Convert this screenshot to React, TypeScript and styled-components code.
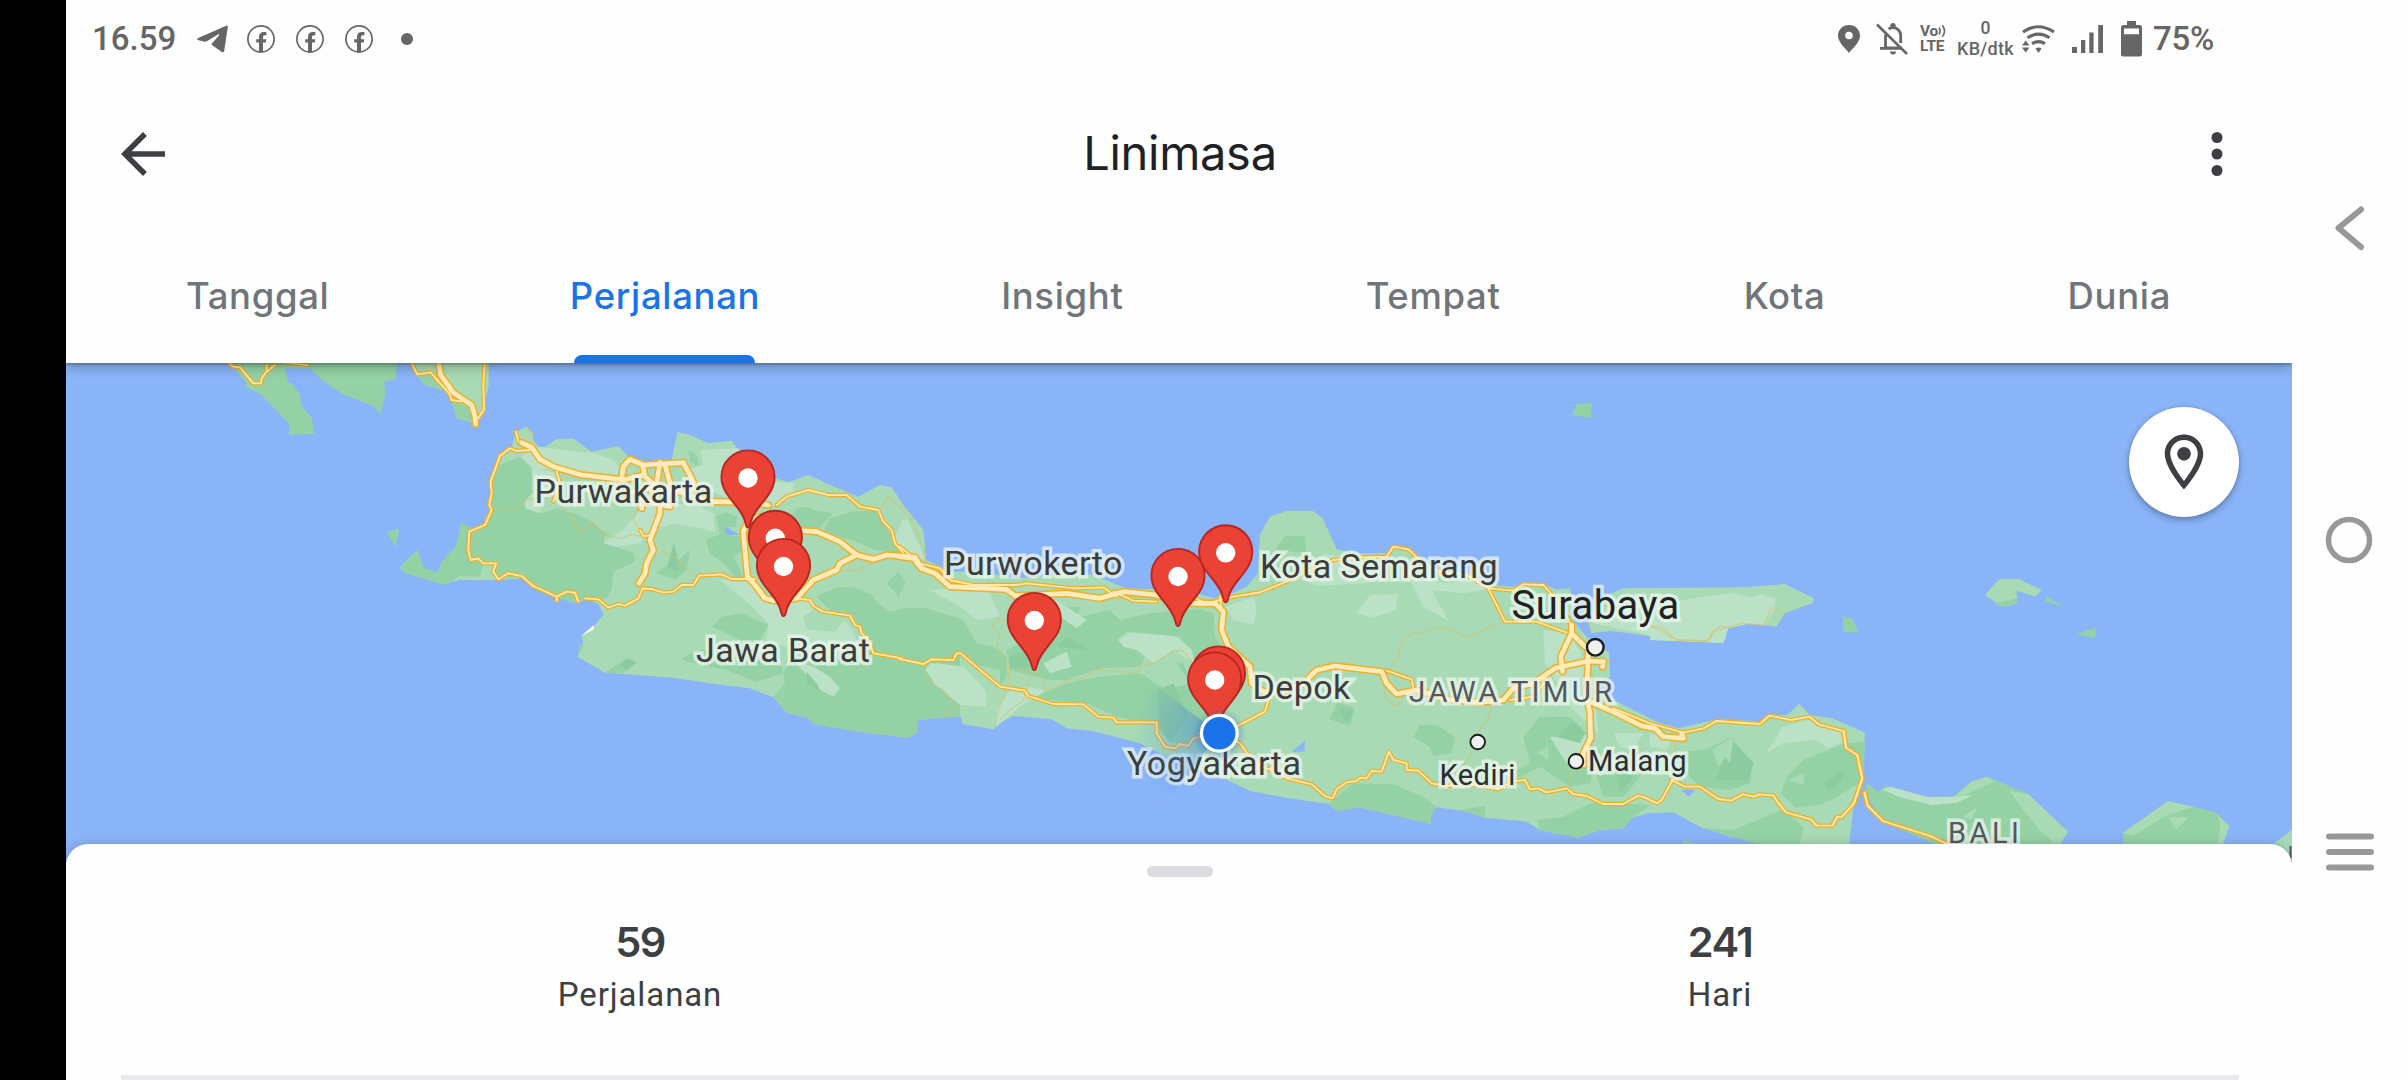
import React from "react";
import styled, { createGlobalStyle } from "styled-components";

const GlobalStyle = createGlobalStyle`
  *, *::before, *::after { box-sizing: border-box; }
  body { margin: 0; background: #fefefe; overflow: hidden; }
`;

const ui = `Roboto, "Liberation Sans", sans-serif`;
const display = `Inter, Roboto, "Liberation Sans", sans-serif`;

const Screen = styled.div`
  display: flex;
  width: 2408px;
  height: 1080px;
  overflow: hidden;
  background: #fefefe;
  font-family: ${ui};
`;

const Cutout = styled.div`
  flex: 0 0 66px;
  background: #000;
`;

const AppFrame = styled.main`
  flex: 0 0 2226px;
  display: flex;
  flex-direction: column;
  overflow: hidden;
`;

/* ---------- status bar ---------- */

const StatusBar = styled.div`
  flex: 0 0 77px;
  display: flex;
  justify-content: space-between;
  padding: 0 77px 0 26px;
  color: #666;
`;

const StatusGroup = styled.div`
  display: flex;
  align-items: center;
  height: 77px;
`;

const StatusText = styled.span<{ $width: number; $left?: number; $track?: number; $weight?: number }>`
  width: ${(p) => p.$width}px;
  margin-left: ${(p) => p.$left ?? 0}px;
  letter-spacing: ${(p) => p.$track ?? 0}px;
  font-size: 33px;
  font-weight: ${(p) => p.$weight ?? 400};
  line-height: 40px;
  white-space: nowrap;
  padding-top: 1px;
`;

const StatusIcon = styled.svg<{ $left: number }>`
  display: block;
  flex: none;
  margin-left: ${(p) => p.$left}px;
`;

const Stack = styled.div<{ $left: number; $width: number }>`
  display: flex;
  flex-direction: column;
  flex: none;
  width: ${(p) => p.$width}px;
  margin-left: ${(p) => p.$left}px;
  white-space: nowrap;
`;

const VoRow = styled.div`
  display: flex;
  align-items: center;
  height: 14px;
  font-size: 15.5px;
  font-weight: 700;
  letter-spacing: -0.4px;
  line-height: 14px;
`;

const LteRow = styled.div`
  height: 15px;
  font-size: 15.5px;
  font-weight: 700;
  letter-spacing: -0.2px;
  line-height: 17px;
`;

const SpeedValue = styled.div`
  height: 18px;
  font-size: 17.5px;
  font-weight: 500;
  line-height: 16px;
  text-align: center;
`;

const SpeedUnit = styled.div`
  height: 20px;
  font-size: 18px;
  font-weight: 500;
  line-height: 22px;
  letter-spacing: 0.3px;
  text-align: center;
`;

/* ---------- top bar and tabs ---------- */

const TopBar = styled.header`
  flex: 0 0 154px;
  display: grid;
  grid-template-columns: 66px 1fr 66px;
  align-items: center;
  padding: 0 42px 0 44px;
  color: #3c4043;
`;

const Title = styled.h1`
  margin: 0;
  padding-bottom: 3px;
  text-align: center;
  font: 400 47px/60px ${display};
  letter-spacing: -0.3px;
  color: #202124;
`;

const IconButton = styled.button`
  display: block;
  width: 66px;
  height: 66px;
  padding: 0;
  border: 0;
  background: none;
  color: #3c4043;
`;

const Tabs = styled.nav`
  position: relative;
  z-index: 2;
  flex: 0 0 132px;
  display: flex;
  justify-content: space-around;
  background: #fefefe;
  box-shadow: 0 3px 12px rgba(0, 0, 0, 0.32), 0 1px 3px rgba(0, 0, 0, 0.28);
  clip-path: inset(0 0 -24px 0);
`;

const Tab = styled.button<{ $active?: boolean; $width: number }>`
  display: flex;
  flex-direction: column;
  align-items: center;
  justify-content: space-between;
  width: ${(p) => p.$width}px;
  padding: 41px 0 0;
  border: 0;
  background: none;
  font: 500 36.5px/48px ${display};
  letter-spacing: 0.65px;
  white-space: nowrap;
  color: ${(p) => (p.$active ? "#1a73e8" : "#70757a")};
`;

const Underline = styled.span`
  width: 181px;
  height: 8px;
  border-radius: 8px 8px 0 0;
  background: #1a73e8;
`;

/* ---------- map ---------- */

const MapView = styled.section`
  position: relative;
  flex: 0 0 500px;
  overflow: hidden;
  background: #8ab4f8;
`;

const MapCanvas = styled.svg`
  display: block;
  width: 2226px;
  height: 500px;
`;

const MapOverlay = styled(MapCanvas)`
  position: absolute;
  inset: 0;
`;

const Place = styled.span<{ $x: number; $base: number; $size?: number; $track?: number; $color?: string }>`
  position: absolute;
  left: ${(p) => p.$x - 66}px;
  top: ${(p) => p.$base - 363 - 24.5 - 0.3415 * (p.$size ?? 34)}px;
  height: 48px;
  font-size: ${(p) => p.$size ?? 34}px;
  line-height: 48px;
  letter-spacing: ${(p) => p.$track ?? 0.45}px;
  color: ${(p) => p.$color ?? "#3c3c3c"};
  -webkit-text-stroke: 7px rgba(236, 246, 238, 0.75);
  paint-order: stroke fill;
  white-space: nowrap;
`;

const LayersButton = styled.button`
  position: absolute;
  top: 44px;
  right: 53px;
  width: 110px;
  height: 110px;
  padding: 22px;
  border: 0;
  border-radius: 50%;
  background: #fff;
  box-shadow: 0 3px 7px rgba(0, 0, 0, 0.3), 0 0 3px rgba(0, 0, 0, 0.12);
  color: #3c4043;
`;

/* ---------- bottom sheet ---------- */

const Sheet = styled.section`
  position: relative;
  z-index: 2;
  flex: 0 0 236px;
  display: flex;
  flex-direction: column;
  align-items: center;
  margin-top: -19px;
  padding: 22px 0 0 2px;
  border-radius: 22px 22px 0 0;
  background: #fefefe;
  box-shadow: 0 -1px 10px rgba(0, 0, 0, 0.16);
`;

const Handle = styled.div`
  width: 66px;
  height: 11px;
  border-radius: 5.5px;
  background: #dadce0;
`;

const Stats = styled.div`
  display: grid;
  grid-template-columns: 1080px 1080px;
  flex: 1;
  padding-top: 38px;
`;

const Stat = styled.div`
  display: flex;
  flex-direction: column;
  align-items: center;
  color: #3c4043;
`;

const StatValue = styled.div`
  font: 600 41.5px/54px ${display};
  letter-spacing: -1.5px;
`;

const StatLabel = styled.div`
  padding-top: 1px;
  font-size: 33px;
  line-height: 50px;
  letter-spacing: 0.9px;
`;

const Divider = styled.div`
  width: 2118px;
  height: 5px;
  background: #e8eaed;
`;

/* ---------- system navigation ---------- */

const SystemNav = styled.aside`
  flex: 1;
  display: flex;
  flex-direction: column;
  align-items: center;
  justify-content: space-between;
  padding: 198px 0;
`;

const NavIcon = styled.svg`
  display: block;
  width: 60px;
  height: 60px;
  stroke: #989898;
  stroke-width: 6;
  fill: none;
  stroke-linecap: round;
  stroke-linejoin: round;
`;

/* ---------- map data: each section has its own local grid ---------- */

type Section = {
  at: string;
  land?: string[];
  forest?: string[];
  plain?: string[];
  water?: string[];
  trail?: string[];
  road?: string[];
  highway?: string[];
};

const third = 1 / 3;

const sections: Section[] = [
  {
    at: `translate(60 350) scale(${third})`,
    land: [
      "1048,30 1070,75 1095,105 1165,125 1190,205 1230,215 1250,225 1272,180 1286,105 1286,30",
      "1172,697 1195,678 1260,680 1272,640 1300,615 1330,640 1375,655 1375,687 1205,689",
    ],
    forest: [
      "495,30 520,52 560,100 558,112 605,135 687,222 687,255 764,251 755,203 723,165 720,133 695,100 684,98 676,55 750,55 795,98 850,133 938,167 962,191 977,130 972,95 1008,86 1011,30",
      "1068,75 1112,68 1130,95 1180,150 1225,175 1240,215 1190,205 1165,125 1095,105",
      "980,545 1018,537 1006,591",
      "1203,516 1240,538 1290,600 1300,620 1272,640 1260,680 1195,678 1172,697 1155,705 1035,670 1018,653 1072,599 1092,654 1132,668 1145,635 1188,588 1197,550",
    ],
    road: [
      "495,30 520,50 540,52 580,100 603,100 605,84 620,65 645,45",
      "620,45 620,65",
      "676,38 743,45",
      "1050,30 1072,73 1112,67 1130,88 1168,130 1175,150 1205,155",
      "1275,30 1270,100 1272,178 1255,205",
    ],
    highway: ["1135,30 1142,75 1180,128 1235,165 1245,200 1247,222"],
  },
  {
    at: `translate(460 350) scale(${third})`,
    land: [
      "155,292 168,245 200,230 218,250 222,275 245,297 290,268 340,266 395,305 475,288 510,325 560,340 635,330 652,246 690,255 745,280 815,272 835,300 950,385 985,397 1045,375 1110,405 1195,440 1260,405 1295,412 1330,465 1390,540 1398,630 1470,665 1500,665 1500,1100 1450,1100 1370,1110 1370,1150 1345,1163 1190,1145 1110,1122 1060,1122 1045,1103 980,1088 940,1042 870,1015 770,1003 640,983 435,968 352,920 370,880 365,857 400,830 430,795 418,765 380,745 355,760 290,745 220,712 185,685 115,690 0,690 0,560 25,540 78,525 90,470 90,390 120,315",
    ],
    forest: [
      "120,345 180,320 220,360 215,430 190,460 200,480 250,490 290,475 340,490 390,500 440,550 430,580 480,595 520,610 525,635 460,665 455,715 440,745 380,740 350,760 290,745 220,712 185,682 110,685 100,640 30,625 22,570 35,540 75,520 95,470 90,390",
      "737,570 780,552 768,500 800,487 830,500 828,532 795,528 795,555 845,560 845,600 820,620 850,680 835,690 790,640 750,610",
      "590,670 625,640 640,580 655,630 690,600 680,660 645,690",
      "685,300 712,318 715,348 690,335",
      "930,525 1000,490 1010,475 1045,470 1060,480 1120,490 1110,500 1070,540 1000,530",
      "1175,485 1255,480 1300,575 1325,610 1245,600 1190,575 1090,545 1110,505",
      "1070,740 1130,712 1180,712 1235,735 1255,760 1290,785 1340,775 1500,815 1500,1100 1370,1110 1370,1150 1345,1163 1190,1145 1060,1122 1045,1103 980,1088 940,1042 975,1000 970,970 1000,920 1150,920 1230,900 1200,840 1175,795 1120,790",
      "665,925 700,905 850,880 960,940 970,970 890,995 800,960 680,935",
      "435,968 500,925 530,938 490,970",
      "757,830 785,800 845,790 925,825 900,870 850,875 800,850",
      "1280,700 1315,665 1337,700 1315,740 1300,720",
      "352,920 362,880 372,888",
    ],
    plain: [
      "180,320 240,290 350,305 400,308 460,330 500,375 440,385 360,372 280,355 225,358",
      "215,352 290,370 300,430 250,440 240,490 200,475 195,455 218,430",
      "720,300 835,295 900,390 1000,400 1000,440 940,470 860,470 700,400 690,355 730,345",
      "430,580 490,540 525,500 545,470 700,460 760,490 765,545 700,530 640,522 575,540 540,580 470,590",
      "1300,570 1330,505 1370,570 1395,630 1325,608",
      "780,690 870,690 940,755 1040,748 1062,780 1030,800 1040,838 1120,845 1155,810 1180,850 1200,890 1000,900 920,870 925,820 865,760",
      "1000,930 1060,950 1110,980 1140,1015 1120,1040 1080,1020",
      "1395,960 1410,940 1510,950 1575,1020 1580,1070 1500,1060 1430,1005",
    ],
    water: ["795,528 840,555 795,555"],
    trail: [
      "95,475 170,475 200,450 260,440 300,400 290,370",
      "300,470 330,490 340,515 360,550 395,515 430,550 480,565 510,555 560,560",
      "530,480 520,510 540,540",
      "600,600 650,625 680,660 710,675",
      "1265,470 1285,440 1350,500 1390,590 1395,635",
      "1140,665 1190,660 1240,640",
      "1390,950 1400,985 1440,1015 1460,1030 1490,1080 1450,1097",
      "200,230 218,250 218,275",
    ],
    road: [
      "215,300 170,303 150,295 120,318 92,395 95,430 88,465 95,480 75,525 28,545 25,600 32,630 55,625 70,640 108,640 100,665 115,688 145,670 185,678 220,708 290,740 320,725 345,728 355,755",
      "375,745 415,748 445,773 475,762 495,767 535,745 548,715 575,717 610,728 640,725 665,705 700,705 718,677 785,673 815,687 885,687",
      "168,245 175,275",
      "290,740 290,752",
      "290,365 300,400 280,455",
      "540,540 550,558 570,556",
      "950,465 980,440 1045,420 1105,435 1160,435 1200,470 1255,480 1270,515 1295,540 1305,580 1330,608",
      "1010,745 1050,750 1060,768 1090,785 1125,790 1170,797 1185,825 1200,830 1205,850 1225,870 1240,910 1280,917 1325,925",
    ],
    highway: [
      "185,278 215,292 240,328 285,352 365,375 440,383 490,390 550,375",
      "485,385 490,350 510,328 550,345 670,338 700,395 690,430",
      "548,345 555,380 590,410",
      "600,338 590,400 590,440",
      "615,345 630,400 620,460",
      "500,430 560,415 640,420 700,440 760,455 865,457 925,465",
      "545,475 545,450 630,470",
      "600,470 600,490 570,570 580,600 560,640 555,670 537,700",
      "900,500 865,510 850,545 862,680 885,705 915,745 940,752 1010,745 1060,690 1130,660 1140,640 1190,615",
      "1000,540 1070,545 1140,575 1190,615 1240,628 1280,615 1365,622 1385,655",
    ],
  },
  {
    at: `translate(900 450) scale(${third})`,
    land: [
      "0,170 70,240 78,330 150,365 230,365 270,370 350,385 480,375 530,370 580,375 640,400 680,415 770,418 850,430 900,432 940,445 975,440 1040,410 1075,370 1080,255 1110,200 1160,183 1200,183 1200,1045 1170,1045 1050,1022 970,985 860,950 760,900 720,880 580,843 500,835 455,808 340,798 300,818 280,838 187,822 185,800 110,800 50,812 48,850 20,862 0,860",
    ],
    forest: [
      "0,475 80,475 190,510 230,580 280,590 320,620 320,680 300,710 210,640 180,610 160,630 70,640 0,630",
      "0,640 70,650 100,700 170,770 120,800 50,812 48,850 20,862 0,860",
      "320,600 390,560 500,520 540,500 630,480 660,510 750,490 900,478 940,490 945,560 975,600 890,640 840,560 740,550 680,545 650,570 690,590 745,600 720,650 600,655 500,690 450,690 330,660",
      "400,745 440,725 500,700 600,680 720,670 760,640 850,640 870,700 950,760 900,850 870,880 810,880 770,825 650,800 560,760",
      "430,500 470,470 540,470 530,510 470,530",
    ],
    plain: [
      "655,570 690,548 740,552 830,560 875,600 885,640 820,600 760,640 710,600 670,590",
      "290,780 330,720 380,710 440,720 360,770 290,830",
      "90,420 220,410 270,430 300,500 230,510 180,470",
      "400,450 470,450 560,510 530,535 480,500 440,510",
      "975,470 1060,440 1070,480 1060,525 1000,510",
      "0,250 20,205 60,290 75,330 0,310",
      "85,650 110,640 190,650 255,720 260,770 180,765 100,700",
      "430,640 500,605 515,650 450,670",
    ],
    trail: [
      "330,510 285,515 275,530 300,550 290,590 325,640 325,700 300,770 290,800",
      "325,665 400,665 430,690 430,720 480,710 500,690 550,685 590,660 710,668 720,650 760,640 820,603 850,603 880,640",
      "395,670 370,750 330,780 300,810",
    ],
    road: [
      "0,290 60,340 120,355 150,390 220,405 350,405 380,400 525,415 610,412 650,440",
      "640,425 700,452 770,455",
      "850,430 920,460 1000,440 1080,427",
      "0,627 70,642 95,628 160,630 170,610 182,610 300,710 375,722 385,738 460,762 550,763 595,800 640,803 650,817 770,817 770,850 795,890 825,895 840,882 865,888 880,865 905,860 958,850",
      "960,850 1020,880 1060,935 1110,960",
      "980,845 1095,785 1105,750 1130,720",
      "960,440 965,480",
    ],
    highway: [
      "0,320 40,325 65,355 105,370 150,410 320,418 345,438 500,430 600,445 670,425 770,435 850,460 945,460 970,485 965,540 985,590 1050,650 1055,700 1090,725 1150,725 1210,700",
    ],
  },
  {
    at: `translate(1250 450) scale(${third})`,
    land: [
      "20,430 30,255 60,200 110,183 188,183 218,205 260,298 320,310 410,310 430,288 480,296 540,350 650,370 745,407 800,410 850,400 885,405 920,418 960,415 970,470 960,500 1010,560 1078,610 1080,680 1060,700 1040,720 1110,760 1220,815 1300,840 1360,830 1400,808 1500,812 1500,1170 1440,1160 1350,1130 1270,1087 1195,1090 1140,1105 1120,1135 1050,1140 985,1163 870,1140 830,1115 705,1103 670,1090 620,1080 560,1072 543,1095 543,1122 330,1072 262,1083 235,1062 120,1045 0,1022 0,430",
      "1015,520 1030,480 1060,440 1120,415 1500,412 1500,520 1435,535 1420,578 1280,572 1140,550 1080,543 1025,550",
    ],
    forest: [
      "75,300 105,258 165,258 170,310",
      "238,808 262,755 315,775 300,828",
      "488,860 510,825 560,825 615,860 605,910 550,918 540,890",
      "820,860 870,802 960,800 1010,850 1000,880 1050,900 1020,1000 960,1010 870,950 800,985 800,960 840,940",
      "235,1062 310,1000 430,1003 520,1040 560,1072 543,1095 543,1122 330,1072 262,1083",
      "860,1110 940,1100 1020,1060 1110,1060 1200,1065 1150,1100 1120,1135 1050,1140 985,1163 870,1140",
      "630,1080 705,1068 705,1103",
      "1320,930 1370,900 1440,862 1500,940 1500,1000 1440,1020 1350,1010 1310,970",
      "1040,980 1140,900 1170,980 1120,1040 1060,1040",
    ],
    plain: [
      "318,490 360,435 445,432 437,480 370,503",
      "480,390 600,400 700,385 720,418 640,430 545,420 595,512 520,470",
      "880,540 960,550 1010,640 1010,760 1040,780 1045,850 970,780 885,640",
      "900,862 1010,855 990,930 950,940",
      "1090,850 1180,850 1150,900 1110,890",
      "150,390 220,310 330,330 400,395 210,408",
      "1030,520 1090,450 1300,450 1440,430 1500,440 1500,520 1435,535 1420,578 1280,572 1080,530",
    ],
    water: ["125,905 165,872 163,905", "1295,1020 1335,1022 1315,1040"],
    trail: [
      "415,660 445,620 450,585 490,545 520,548 565,530 620,545 645,563 720,530 765,517",
      "730,760 710,810 680,850",
      "670,900 640,950",
      "970,960 950,1010",
      "400,660 405,745 435,768 460,755",
      "1255,860 1275,890 1270,940",
      "1015,520 1025,550",
      "1200,530 1230,530 1280,570 1375,572 1390,545 1440,530",
    ],
    road: [
      "0,432 30,427 110,395 170,365 250,330 330,322 410,320 430,290 475,298 520,340 570,365 650,375 715,415 765,515 860,515 950,548",
      "715,415 790,422 820,403 880,405 925,455 950,500 965,530",
      "60,955 110,985 185,1003 225,1038 248,1045 260,1018 290,997 320,993 330,983 350,985 365,963 395,965 417,905 430,930 470,940 470,960 505,962 530,985 545,1000 590,1008 650,1000 745,1018 790,993 825,990 840,1018 865,1015 890,1027 950,1015 970,1032 1010,1038 1060,1062 1120,1062 1165,1037 1185,1043 1222,1060 1235,1050 1268,990",
      "410,662 485,688 490,715",
      "780,750 850,740 890,690",
      "1090,775 1200,820 1290,845",
    ],
    highway: [
      "100,725 160,700 200,660 255,648 395,665 410,700 440,732 500,720 600,750 690,757 760,750 790,715 850,700 915,655 1015,633 1060,635 1058,650",
      "965,525 965,550 1000,585 1015,595",
      "965,550 932,620 938,665",
      "1015,600 1010,740 1020,790 1022,865 1000,910 1000,945",
      "1010,750 1100,790 1175,828 1215,835 1240,860 1300,865 1295,850",
    ],
  },
  {
    at: `translate(1650 380) scale(${1 / 2.412} ${third})`,
    land: [
      "70,1045 160,1018 262,1030 290,1003 330,1006 360,972 385,1005 440,1015 518,1058 518,1090 514,1200 500,1240 490,1290 480,1350 482,1400 280,1400 210,1368 130,1345 60,1297 0,1297 0,1060",
      "0,626 185,626 325,612 395,655 395,668 325,700 305,740 275,735 220,730 188,742 177,788 0,780",
      "811,640 842,598 890,597 945,630 930,650 884,632 887,670 850,680 811,648",
      "1495,1400 1548,1350 1560,1345 1560,1440",
    ],
    forest: [
      "955,648 997,680 953,663",
      "465,707 490,718 503,758 466,755",
      "1028,763 1076,742 1074,774",
      "830,672 887,655 887,670 850,680",
      "80,1115 130,1110 195,1073 250,1150 240,1210 160,1225 100,1190",
      "330,1190 370,1140 470,1090 518,1085 515,1200 440,1260 410,1275 350,1282 315,1240",
      "260,1320 320,1290 370,1340 360,1400 280,1400 130,1345 200,1350",
      "523,1208 550,1235 570,1218 670,1250 730,1250 775,1205 812,1190 910,1240 1008,1355 985,1400 700,1400 560,1322 520,1240",
      "1140,1360 1250,1263 1365,1297 1397,1338 1380,1400 1142,1400",
      "80,1380 110,1392 80,1400",
    ],
    plain: [
      "0,705 70,665 100,655 205,640 235,655 270,642 303,658 300,690 275,735 220,730 188,742 177,788 0,780",
      "280,1120 320,1040 390,1018 465,1055 470,1085 430,1105 400,1080 320,1090",
      "560,1228 580,1220 670,1252 730,1250 780,1245 740,1268 680,1275 600,1250",
      "0,1060 50,1080 40,1110 0,1100",
    ],
    water: ["78,1228 108,1230 93,1250"],
    trail: ["0,735 65,780 140,783 150,755 172,738 190,742 220,730 275,735 293,682 328,703"],
    road: [
      "52,1200 85,1220 120,1220 165,1257 195,1262 225,1243 250,1250 265,1243 298,1247 310,1270 328,1297 388,1318 402,1337 440,1337 452,1310 462,1312 492,1270 512,1195 500,1125 473,1103 467,1053 407,1033 385,1010 340,1020 288,1007 265,1032 160,1023 130,1045 80,1058",
      "517,1237 525,1277 562,1323 680,1370 730,1400",
    ],
  },
];

/* soft relief drawn above the forest */
const relief: { at: string; light: string[]; deep: string[] }[] = [
  {
    at: sections[4].at,
    light: [
      "150,1110 195,1073 185,1130 165,1160",
      "335,1200 372,1178 370,1215",
      "865,1230 915,1245 1008,1355 985,1400 940,1350 900,1290",
      "775,1205 812,1190 830,1205 770,1240 735,1250",
      "755,1310 790,1280 775,1320",
      "1140,1358 1250,1263 1310,1280 1240,1310 1165,1368",
      "1370,1305 1397,1338 1380,1400 1368,1400 1375,1340",
      "1250,1312 1300,1312 1268,1350",
      "410,1275 505,1225 490,1290 480,1400 370,1400 370,1340 400,1330",
    ],
    deep: ["195,1080 250,1150 235,1200 160,1200", "420,1210 465,1172 465,1200 430,1230"],
  },
  {
    at: sections[1].at,
    light: ["345,490 460,500 500,510 455,540 430,545 395,515", "1030,800 1060,780 1150,800 1130,840 1060,840"],
    deep: ["620,655 642,580 658,665", "1040,965 1070,1000 1085,1030 1040,1000", "480,945 505,925 530,938 500,960"],
  },
  {
    at: sections[2].at,
    light: ["740,640 830,640 870,700 800,720 720,670", "210,640 300,660 300,700 330,720 300,740"],
    deep: ["770,720 820,700 865,795 815,880 780,840", "470,590 500,560 565,600", "330,620 390,600 400,650 330,655"],
  },
  {
    at: sections[3].at,
    light: ["860,905 895,890 895,930", "1400,890 1450,865 1440,940"],
    deep: ["920,860 970,815 1005,850 990,880", "1100,960 1140,900 1150,980 1110,1030", "265,775 310,780 290,820"],
  },
];

const pins: [number, number][] = [
  [748, 478],
  [775.3, 538.3],
  [783.5, 566.5],
  [1225.7, 552.8],
  [1178, 576.5],
  [1034.3, 620.5],
  [1218.5, 674],
  [1214.7, 680],
];

const towns: [number, number, number, number][] = [
  [1595.3, 647.3, 8.3, 2.4],
  [1477.7, 742, 7.3, 1.9],
  [1576, 761.3, 7.3, 1.9],
];

const Polys = ({ list, fill }: { list?: string[]; fill: string }) => (
  <>{(list ?? []).map((points) => <polygon key={points} points={points} fill={fill} />)}</>
);

const Lines = ({ list, stroke, width }: { list?: string[]; stroke: string; width: number }) => (
  <>
    {(list ?? []).map((points) => (
      <polyline
        key={points}
        points={points}
        fill="none"
        stroke={stroke}
        strokeWidth={width}
        strokeLinejoin="round"
        strokeLinecap="round"
      />
    ))}
  </>
);

const Terrain = () => (
  <MapCanvas viewBox="66 363 2226 500" aria-hidden="true">
    {sections.map((s) => (
      <g key={s.at} transform={s.at}><Polys list={s.land} fill="#a8dab5" /></g>
    ))}
    <polygon points="1572,415 1577,404 1592,403 1591,418" fill="#94d2a5" />
    {sections.map((s) => (
      <g key={s.at} transform={s.at}>
        <Polys list={s.forest} fill="#94d2a5" />
        <Polys list={s.plain} fill="#bbe2c6" />
        <Polys list={s.water} fill="#8ab4f8" />
      </g>
    ))}
    {relief.map((r) => (
      <g key={r.at} transform={r.at}>
        <Polys list={r.light} fill="#a8dab5" />
        <Polys list={r.deep} fill="#8ccb9f" />
      </g>
    ))}
    <polygon points="581.5,635.7 594,625 593.5,629.5" fill="#fff" />
    {sections.map((s) => (
      <g key={s.at} transform={s.at}>
        <Lines list={s.trail} stroke="rgba(222,190,95,.5)" width={4} />
        <Lines list={s.road} stroke="#ecb02c" width={13} />
      </g>
    ))}
    {sections.map((s) => (
      <g key={s.at} transform={s.at}>
        <Lines list={s.highway} stroke="#ecb02c" width={23} />
      </g>
    ))}
    {sections.map((s) => (
      <g key={s.at} transform={s.at}>
        <Lines list={s.road} stroke="#ffe9a8" width={5.5} />
        <Lines list={s.highway} stroke="#ffebb8" width={14} />
      </g>
    ))}
    {towns.map(([x, y, r, w]) => (
      <circle key={x} cx={x} cy={y} r={r} fill="#f1f1f1" stroke="#1b1b1b" strokeWidth={w} />
    ))}
    <rect x="2289.5" y="846" width="2" height="12" fill="#54585c" />
  </MapCanvas>
);

const Markers = () => (
  <MapOverlay viewBox="66 363 2226 500" aria-hidden="true">
    <defs>
      <radialGradient id="beam" gradientUnits="userSpaceOnUse" cx="1219.3" cy="733.3" r="86">
        <stop offset="0" stopColor="#3a78d6" stopOpacity=".6" />
        <stop offset=".5" stopColor="#4285e8" stopOpacity=".26" />
        <stop offset="1" stopColor="#4285f4" stopOpacity="0" />
      </radialGradient>
      <radialGradient id="halo" gradientUnits="userSpaceOnUse" cx="1219.3" cy="734.5" r="27">
        <stop offset=".6" stopColor="#2b5fae" stopOpacity=".35" />
        <stop offset="1" stopColor="#2b5fae" stopOpacity="0" />
      </radialGradient>
    </defs>
    {pins.map(([x, y]) => (
      <g key={`${x}-${y}`} transform={`translate(${x} ${y})`}>
        <path
          d="M0 49.600C-1.600 49.600-2 48-2.400 45.600C-5.400 28-26.600 19-26.600-1A26.600 26.600 0 1 1 26.600-1C26.600 19 5.400 28 2.400 45.600C2 48 1.600 49.600 0 49.600Z"
          fill="#ea4335"
          stroke="#b92521"
          strokeWidth="1.900"
        />
        <circle r="9.700" fill="#fff" />
      </g>
    ))}
    <path d="M1219.300 733.300L1150 682A88 88 0 0 0 1166 803Z" fill="url(#beam)" />
    <circle cx="1219.300" cy="734.500" r="27" fill="url(#halo)" />
    <circle cx="1219.300" cy="733.300" r="19.500" fill="#fff" />
    <circle cx="1219.300" cy="733.300" r="16.200" fill="#1a73e8" />
  </MapOverlay>
);

/* ---------- status icons ---------- */

const FacebookGlyph = ({ left }: { left: number }) => (
  <StatusIcon $left={left} width="28" height="28" viewBox="0 0 28 28">
    <circle cx="14" cy="14" r="13.1" fill="none" stroke="currentColor" strokeWidth="1.7" />
    <path
      fill="currentColor"
      d="M12 27V17.6H9.2V14.2H12V12.3C12 8.7 13.7 7.1 17 7.1C18 7.1 18.900 7.200 19.400 7.350V10.200H17.800C16.500 10.200 16 10.900 16 12.200V14.200H19.300L18.800 17.600H16V27Z"
    />
  </StatusIcon>
);

export default function App() {
  return (
    <>
      <GlobalStyle />
      <Screen>
        <Cutout />
        <AppFrame>
          <StatusBar>
            <StatusGroup>
              <StatusText $width={84} $weight={500}>16.59</StatusText>
              <StatusIcon $left={21} width="31" height="28" viewBox="0 0 31 28" fill="currentColor">
                <path d="M29.200 .8C30.200 .4 31 .9 30.800 2L27.200 26C27 27.400 25.900 27.700 24.900 27L15.200 20.200C14.400 19.600 14.400 18.900 15.100 18.200L22 10.500C22.600 9.600 21.900 8.900 21 9.500L9.800 16.300C8.900 16.800 8 16.900 7 16.600L1.500 15.300C-.2 14.800-.3 13.900 1.300 13Z" />
              </StatusIcon>
              <FacebookGlyph left={19} />
              <FacebookGlyph left={21} />
              <FacebookGlyph left={21} />
              <StatusIcon $left={28} width="12" height="12" viewBox="0 0 12 12">
                <circle cx="6" cy="6" r="6" fill="currentColor" />
              </StatusIcon>
            </StatusGroup>
            <StatusGroup>
              <StatusIcon $left={0} width="22" height="28" viewBox="0 0 22 28">
                <path
                  fill="currentColor"
                  fillRule="evenodd"
                  d="M11 0C17.200 0 22 4.700 22 10.600C22 17.500 15.500 22.500 11 28C6.500 22.500 0 17.500 0 10.600C0 4.700 4.800 0 11 0ZM11 6.700A3.800 3.800 0 1 0 11 14.300A3.800 3.800 0 1 0 11 6.700Z"
                />
              </StatusIcon>
              <StatusIcon $left={16} width="32" height="32" viewBox="0 0 32 32" fill="none" stroke="currentColor">
                <path strokeWidth="2.800" d="M9.500 11.500V24.800H25.500M4 25.300H26M24.700 20V12.500C24.700 8 21.500 4.700 17 4.700C15.300 4.700 13.800 5.200 12.600 6" />
                <path strokeWidth="2.500" d="M1 1.500L31 31" />
                <path fill="currentColor" stroke="none" d="M14.300 4.500V2.700A2.700 2.700 0 0 1 19.700 2.700V4.500ZM14 28.500H20A3 3 0 0 1 14 28.500Z" />
              </StatusIcon>
              <Stack $left={12} $width={27}>
                <VoRow>
                  Vo
                  <svg width="9" height="14" viewBox="0 0 9 14" fill="none" stroke="currentColor" strokeWidth="1.600">
                    <path d="M1 3.500Q3.300 7 1 10.500M4.300 1.200Q8.800 7 4.300 12.800" />
                  </svg>
                </VoRow>
                <LteRow>LTE</LteRow>
              </Stack>
              <Stack $left={9} $width={59}>
                <SpeedValue>0</SpeedValue>
                <SpeedUnit>KB/dtk</SpeedUnit>
              </Stack>
              <StatusIcon $left={7} width="33" height="28" viewBox="0 0 33 28" fill="none" stroke="currentColor" strokeWidth="3.100">
                <path d="M1 7Q16 -3.500 32 7M5.500 12.800Q16.500 5.500 27.500 12.800M10 18.600Q16.500 14.700 23 18.600" />
                <path fill="currentColor" stroke="none" d="M13.500 23.500Q16.500 21.500 19.500 23.500L16.500 28ZM0 20.500L3.700 15.500L7.400 20.500ZM0 22.500H7.400L3.700 27.500Z" />
              </StatusIcon>
              <StatusIcon $left={17} width="31" height="28" viewBox="0 0 31 28" fill="currentColor">
                <path d="M0 22H5V28H0ZM9 15H13.300V28H9ZM17.300 7.500H21.600V28H17.300ZM26.200 0H31V28H26.200Z" />
              </StatusIcon>
              <StatusIcon $left={18} width="21" height="36" viewBox="0 0 21 36">
                <path
                  fill="currentColor"
                  fillRule="evenodd"
                  d="M6 0H15V4H18.500A2.500 2.500 0 0 1 21 6.500V33A2.500 2.500 0 0 1 18.500 35.500H2.500A2.500 2.500 0 0 1 0 33V6.500A2.500 2.500 0 0 1 2.500 4H6ZM3 7.500V13.300H18V7.500Z"
                />
              </StatusIcon>
              <StatusText $left={11} $width={62} $weight={500} $track={-0.3}>75%</StatusText>
            </StatusGroup>
          </StatusBar>

          <TopBar>
            <IconButton aria-label="Kembali">
              <svg width="66" height="66" viewBox="0 0 24 24" fill="currentColor">
                <path d="M20 11H7.830l5.590-5.590L12 4l-8 8 8 8 1.410-1.410L7.830 13H20v-2z" />
              </svg>
            </IconButton>
            <Title>Linimasa</Title>
            <IconButton aria-label="Opsi lainnya">
              <svg width="66" height="66" viewBox="0 0 24 24" fill="currentColor">
                <circle cx="12" cy="6" r="2" />
                <circle cx="12" cy="12" r="2" />
                <circle cx="12" cy="18" r="2" />
              </svg>
            </IconButton>
          </TopBar>

          <Tabs>
            <Tab $width={141}>Tanggal</Tab>
            <Tab $width={189} $active>
              Perjalanan
              <Underline />
            </Tab>
            <Tab $width={121}>Insight</Tab>
            <Tab $width={136}>Tempat</Tab>
            <Tab $width={82}>Kota</Tab>
            <Tab $width={103}>Dunia</Tab>
          </Tabs>

          <MapView>
            <Terrain />
            <Place $x={534.5} $base={503.500}>Purwakarta</Place>
            <Place $x={696} $base={662}>Jawa Barat</Place>
            <Place $x={944} $base={575.500}>Purwokerto</Place>
            <Place $x={1260} $base={578}>Kota Semarang</Place>
            <Place $x={1252.5} $base={699}>Depok</Place>
            <Place $x={1127} $base={775.500}>Yogyakarta</Place>
            <Place $x={1511.5} $base={620} $size={40} $color="#202124">Surabaya</Place>
            <Place $x={1409} $base={702.5} $size={29.500} $track={3.200} $color="#54585c">JAWA TIMUR</Place>
            <Place $x={1439.5} $base={785} $size={29} $color="#2b2d30">Kediri</Place>
            <Place $x={1588} $base={771.500} $size={29} $color="#2b2d30">Malang</Place>
            <Place $x={1948} $base={843} $size={29} $track={3.500} $color="#54585c">BALI</Place>
            <Markers />
            <LayersButton aria-label="Tempat di peta">
              <svg width="66" height="66" viewBox="0 0 24 24" fill="currentColor">
                <path d="M12 2C8.130 2 5 5.130 5 9c0 5.250 7 13 7 13s7-7.750 7-13c0-3.870-3.130-7-7-7zM7 9c0-2.760 2.240-5 5-5s5 2.240 5 5c0 2.880-2.880 7.190-5 9.880C9.920 16.210 7 11.850 7 9z" />
                <circle cx="12" cy="9" r="2.500" />
              </svg>
            </LayersButton>
          </MapView>

          <Sheet>
            <Handle />
            <Stats>
              <Stat>
                <StatValue>59</StatValue>
                <StatLabel>Perjalanan</StatLabel>
              </Stat>
              <Stat>
                <StatValue>241</StatValue>
                <StatLabel>Hari</StatLabel>
              </Stat>
            </Stats>
            <Divider />
          </Sheet>
        </AppFrame>

        <SystemNav>
          <NavIcon viewBox="0 0 60 60">
            <path d="M41 11.500L18.500 30L41 49" />
          </NavIcon>
          <NavIcon viewBox="0 0 60 60">
            <circle cx="29" cy="30" r="20.500" strokeWidth="5.500" />
          </NavIcon>
          <NavIcon viewBox="0 0 60 60">
            <path d="M9 14.500H51M9 30H51M9 45.500H51" />
          </NavIcon>
        </SystemNav>
      </Screen>
    </>
  );
}
